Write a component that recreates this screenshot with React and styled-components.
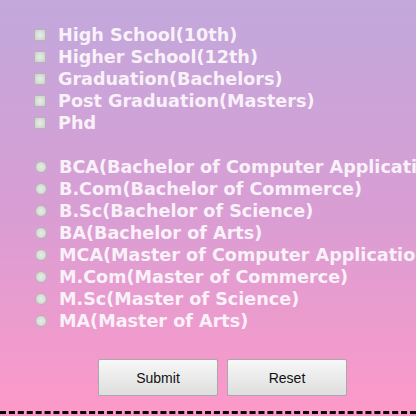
import React from 'react';
import styled, { createGlobalStyle } from 'styled-components';

const GlobalStyle = createGlobalStyle`
  html, body {
    margin: 0;
    padding: 0;
    overflow: hidden;
  }
  body {
    width: 416px;
    height: 416px;
    background: linear-gradient(to bottom, #c2a8dc 0%, #d89ed4 50%, #fd99c9 100%);
  }
`;

const Page = styled.div`
  height: 416px;
  display: flex;
  flex-direction: column;
  white-space: nowrap;
`;

const Form = styled.form`
  padding: 24px 0 0 34px;
  display: flex;
  flex-direction: column;
`;

const Group = styled.div`
  display: flex;
  flex-direction: column;
  margin-bottom: ${(p) => p.$gap || 0}px;
`;

const Row = styled.label`
  display: flex;
  align-items: center;
  height: 22px;
  gap: 12px;
  font-family: "DejaVu Sans", Verdana, sans-serif;
  font-weight: bold;
  font-size: 17.6px;
  color: #f8f1f8;
`;

const Box = styled.span`
  width: 10px;
  height: 10px;
  flex: none;
  border: 1px solid #b4b4b4;
  border-radius: ${(p) => (p.$round ? '50%' : '1px')};
  background: radial-gradient(circle at 50% 50%, #e6efe6 0%, #d4d8d4 70%, #c8c8c8 100%);
  margin-left: ${(p) => (p.$round ? 1 : 0)}px;
`;

const Buttons = styled.div`
  display: flex;
  gap: 9px;
  padding: 27px 0 0 98px;
`;

const Button = styled.button`
  width: 120px;
  height: 37px;
  font-family: "Liberation Sans", Arial, sans-serif;
  font-size: 14px;
  color: #111;
  border: 1px solid #a9a9a9;
  border-radius: 2px;
  background: linear-gradient(to bottom, #f7f7f7, #dedede);
`;

const Dashed = styled.div`
  margin-top: 15px;
  border-top: 3px dashed #000;
`;

const levels = [
  'High School(10th)',
  'Higher School(12th)',
  'Graduation(Bachelors)',
  'Post Graduation(Masters)',
  'Phd',
];

const courses = [
  'BCA(Bachelor of Computer Application)',
  'B.Com(Bachelor of Commerce)',
  'B.Sc(Bachelor of Science)',
  'BA(Bachelor of Arts)',
  'MCA(Master of Computer Application)',
  'M.Com(Master of Commerce)',
  'M.Sc(Master of Science)',
  'MA(Master of Arts)',
];

export default function App() {
  return (
    <Page>
      <GlobalStyle />
      <Form>
        <Group $gap={22}>
          {levels.map((l) => (
            <Row key={l}>
              <Box />
              {l}
            </Row>
          ))}
        </Group>
        <Group>
          {courses.map((c) => (
            <Row key={c}>
              <Box $round />
              {c}
            </Row>
          ))}
        </Group>
      </Form>
      <Buttons>
        <Button type="button">Submit</Button>
        <Button type="button">Reset</Button>
      </Buttons>
      <Dashed />
    </Page>
  );
}
